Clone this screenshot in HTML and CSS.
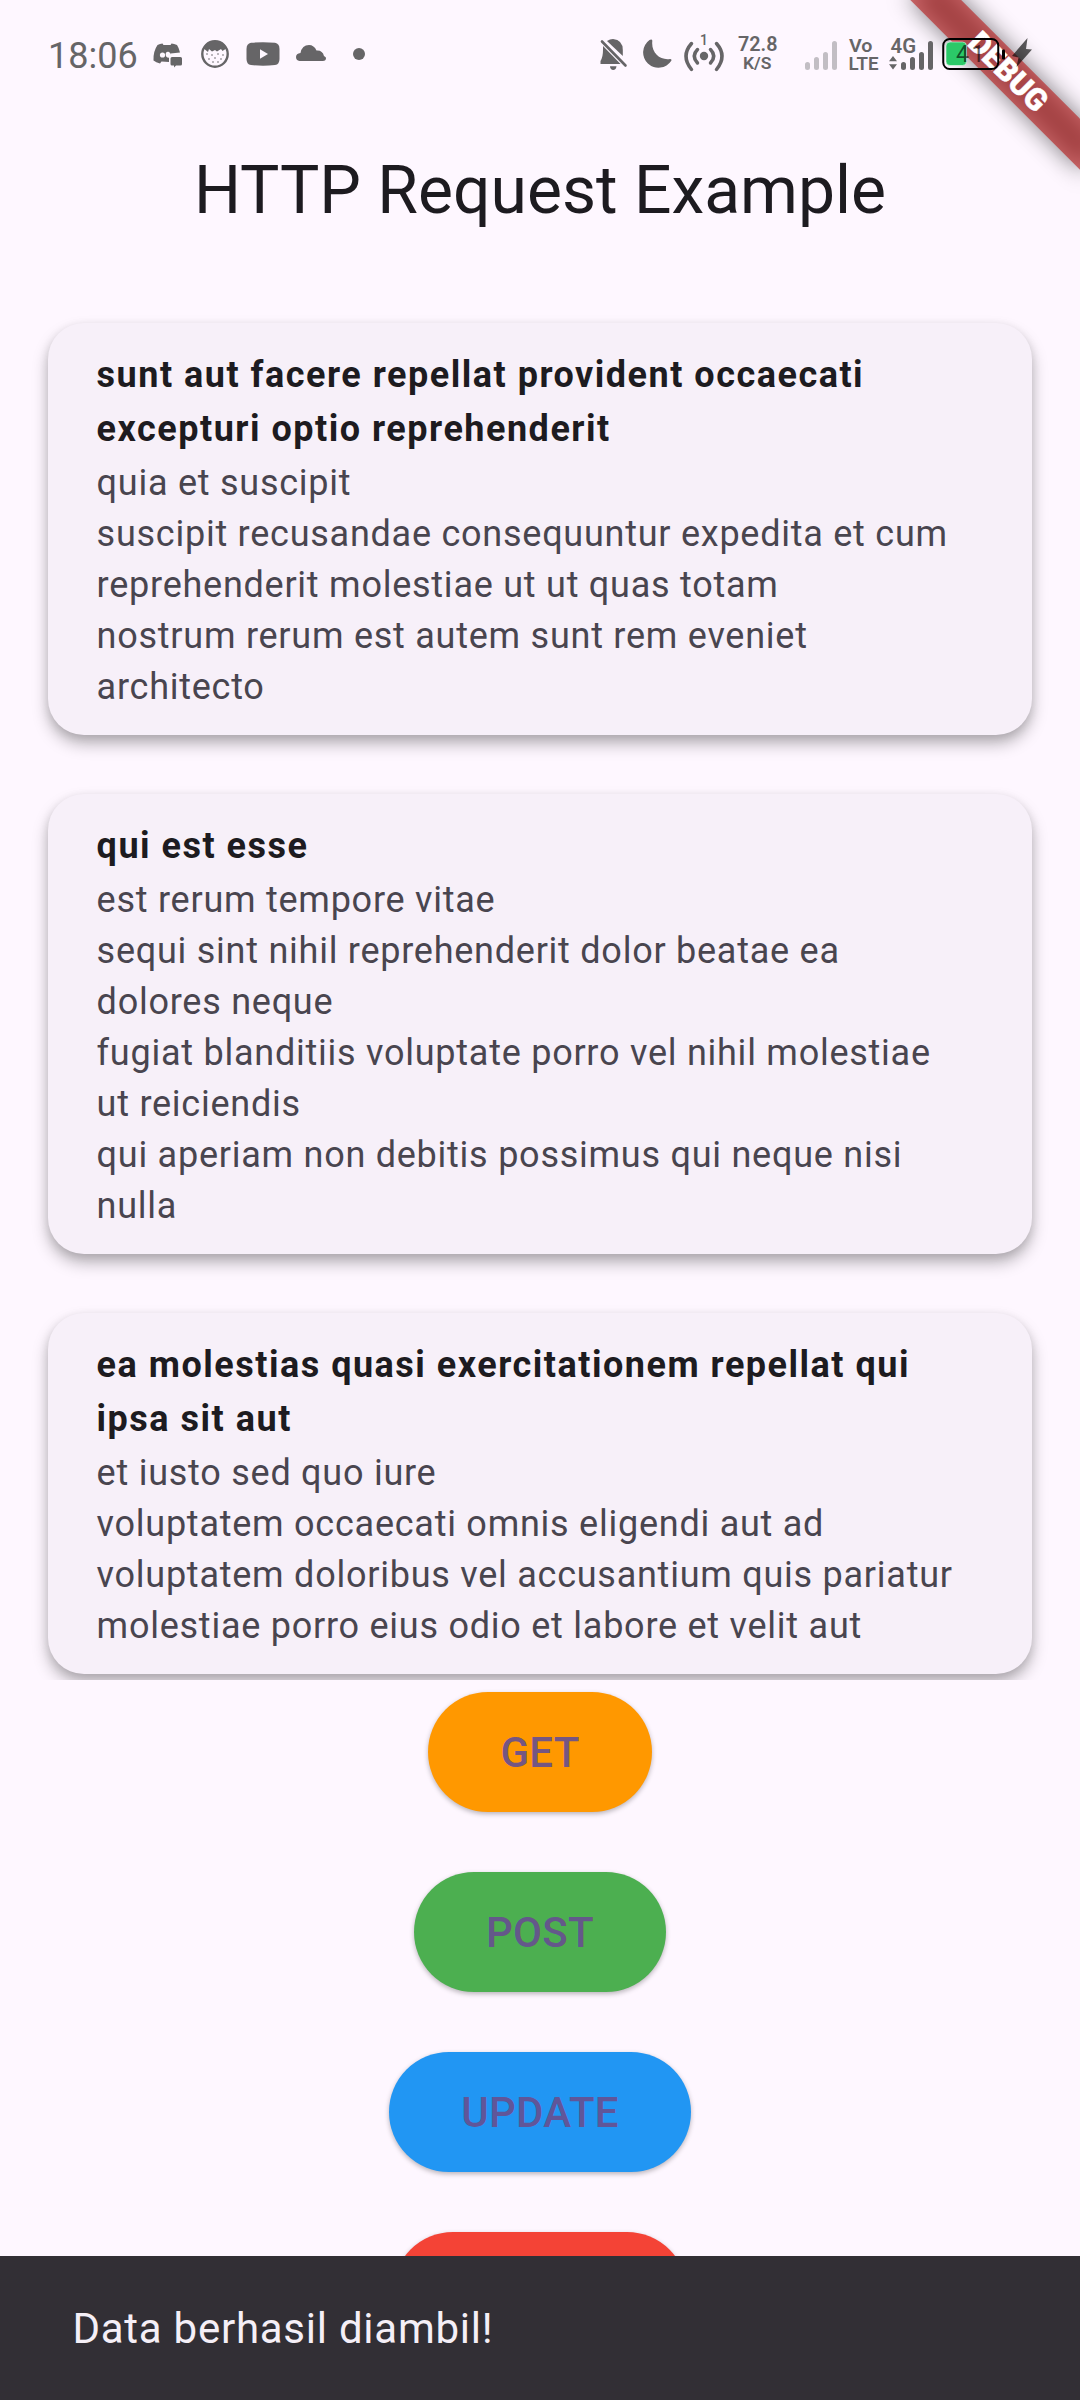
FILE: index.html
```html
<!DOCTYPE html>
<html lang="id">
<head>
<meta charset="utf-8">
<title>HTTP Request Example</title>
<link rel="stylesheet" href="styles.css">
</head>
<body>
<div class="screen">
  <header class="status-bar">
    <span class="clock">18:06</span>
    <svg class="status-left" viewBox="150 36 220 36" width="220" height="36" fill="#666567">
      <path d="M157.500 45 Q160 43.600 162.500 43.500 L163.500 45 H170.500 L171.500 43.500 Q174 43.600 177 45 Q179 48 180 52.500 L170.500 53.500 V55 A2.400 3 0 1 0 169 57.500 V62 L161.500 61.500 L160 63.500 Q156 62.500 153.500 60.500 Q153 51.500 157.500 45Z"/>
      <circle cx="162.500" cy="55" r="2.600" fill="#fef7ff"/>
      <path d="M172 57 H180.500 Q182 57 182 58.500 V64 Q182 65.500 180.500 65.500 H176 L174 67.500 V65.500 H172 Q170.500 65.500 170.500 64 V58.500 Q170.500 57 172 57Z"/>
      <circle cx="215" cy="54" r="12.700" fill="none" stroke="#666567" stroke-width="2.400"/>
      <path d="M203 48 Q207 41 215 41 T227 48 L222.500 51 L221 49 L217 51.500 L215 50 L212 51.500 L209 49 L208 52Z"/>
      <g><circle cx="207" cy="54" r=".8"/><circle cx="212" cy="55" r=".8"/><circle cx="218" cy="54" r=".8"/><circle cx="223" cy="55" r=".8"/><circle cx="209" cy="59" r=".8"/><circle cx="215" cy="58" r=".8"/><circle cx="221" cy="59" r=".8"/><circle cx="213" cy="62" r=".8"/><circle cx="218" cy="62" r=".8"/></g>
      <path d="M251 42.800 Q263 41.600 275 42.800 Q279.500 43.500 279.500 49 V59 Q279.500 64.500 275 65.100 Q263 66.200 251 65.100 Q246.500 64.500 246.500 59 V49 Q246.500 43.500 251 42.800Z"/>
      <path d="M260 49.300 L268 54 L260 58.800Z" fill="#fef7ff"/>
      <path d="M299.500 61 Q296 60.500 296 57 Q296 53.500 300.500 53 Q302 45 309 45 Q314 45 316.500 50.500 Q322.500 50 324 56 Q326.500 57 326 59 Q325.500 61 323 61Z"/>
      <circle cx="359" cy="54" r="6"/>
    </svg>
    <svg class="status-right" viewBox="596 30 454 44" width="454" height="44" fill="#666567">
      <path d="M603 46 V50 Q603 57 600.500 61 V64 H620.500Z"/>
      <path d="M607 41 Q610 39 613 39 Q622.800 40 622.800 50 V56Z"/>
      <path d="M610 66.200 H616.500 Q616 70 613.200 70 T610 66.200Z"/>
      <path d="M602 41.500 L625.500 65.500" stroke="#666567" stroke-width="2.600" stroke-linecap="round"/>
      <path d="M651 39.500 Q652.500 39.500 652.300 41 C651 53 660 60.500 670 59 Q672 59 671.300 60.700 A15.300 15.300 0 1 1 649.500 40 Q650.500 39.500 651 39.500Z"/>
      <circle cx="704" cy="56" r="4.200"/>
      <g fill="none" stroke="#666567" stroke-width="3.500" stroke-linecap="round">
        <path d="M697.500 49.500 Q691 56 697.500 63"/>
        <path d="M691.500 43.500 Q680.500 56 691.500 69.500"/>
        <path d="M710.500 49.500 Q717 56 710.500 63"/>
        <path d="M716.500 43.500 Q727.500 56 716.500 69.500"/>
      </g>
      <text x="704" y="45" class="tiny" text-anchor="middle">1</text>
      <text x="738" y="51" class="speed" textLength="39.500" lengthAdjust="spacingAndGlyphs">72.8</text>
      <text x="743" y="69" class="unit" textLength="28.500" lengthAdjust="spacingAndGlyphs">K/S</text>
      <g stroke="#c2bec4" stroke-width="5" stroke-linecap="round">
        <path d="M807.500 64.500 V67.500 M816.500 59.500 V67.500 M825.500 54.500 V67.500 M834.500 43.500 V67.500"/>
      </g>
      <text x="849" y="52" class="net" textLength="23.500" lengthAdjust="spacingAndGlyphs">Vo</text>
      <text x="848.500" y="70" class="net" textLength="30" lengthAdjust="spacingAndGlyphs">LTE</text>
      <text x="890.500" y="53" class="gen" textLength="25.500" lengthAdjust="spacingAndGlyphs">4G</text>
      <path d="M889 61.300 L893 56 L897 61.300Z M889 64.300 L893 69.500 L897 64.300Z"/>
      <g stroke="#666567" stroke-width="5" stroke-linecap="round">
        <path d="M903.500 64.500 V67.500 M912.500 59.500 V67.500 M921.500 54.500 V67.500 M930.500 43.500 V67.500"/>
      </g>
      <path d="M1027.500 38 L1026 49 L1032 49.500 L1016.500 67 L1018.500 57.500 L1012 56Z" fill="#000" fill-opacity=".64"/>
      <rect x="946" y="42" width="20.500" height="23.500" rx="4" fill="#2bc968" stroke="#fff" stroke-opacity=".5"/>
      <text x="956" y="62" class="level">41</text>
      <rect x="943.250" y="39" width="55" height="30" rx="6.500" fill="none" stroke="#000" stroke-width="2"/>
      <rect x="1002" y="49.500" width="3" height="10" rx="1" fill="#000"/>
    </svg>
  </header>
  <h1 class="app-title">HTTP Request Example</h1>

  <main class="posts">
    <article class="card">
      <h2>sunt aut facere repellat provident occaecati<br>excepturi optio reprehenderit</h2>
      <p>quia et suscipit<br>suscipit recusandae consequuntur expedita et cum<br>reprehenderit molestiae ut ut quas totam<br>nostrum rerum est autem sunt rem eveniet<br>architecto</p>
    </article>
    <article class="card">
      <h2>qui est esse</h2>
      <p>est rerum tempore vitae<br>sequi sint nihil reprehenderit dolor beatae ea<br>dolores neque<br>fugiat blanditiis voluptate porro vel nihil molestiae<br>ut reiciendis<br>qui aperiam non debitis possimus qui neque nisi<br>nulla</p>
    </article>
    <article class="card">
      <h2>ea molestias quasi exercitationem repellat qui<br>ipsa sit aut</h2>
      <p>et iusto sed quo iure<br>voluptatem occaecati omnis eligendi aut ad<br>voluptatem doloribus vel accusantium quis pariatur<br>molestiae porro eius odio et labore et velit aut</p>
    </article>
  </main>

  <div class="actions">
    <button class="btn get">GET</button>
    <button class="btn post">POST</button>
    <button class="btn update">UPDATE</button>
    <button class="btn delete">DELETE</button>
  </div>

  <div class="snackbar">Data berhasil diambil!</div>
  <div class="banner"><div class="ribbon-shadow"></div><div class="ribbon">DEBUG</div></div>
</div>
</body>
</html>
```
FILE: styles.css
```css
* { box-sizing: border-box; }
body { margin: 0; font-family: Roboto, "Liberation Sans", sans-serif; }
h1, h2, p { margin: 0; }

.screen {
  position: relative;
  display: flex;
  flex-direction: column;
  width: 1080px;
  height: 2400px;
  overflow: hidden;
  background: #fef7ff;
  color: #1d1b20;
}

/* The system bar stays above the debug ribbon. */
.status-bar {
  position: relative;
  z-index: 2;
  display: flex;
  align-items: flex-start;
  flex: none;
  height: 107px;
  padding-left: 48px;
  color: #666567;
}
.clock { width: 102px; margin-top: 34px; font-size: 36px; line-height: 44px; }
.status-left { margin-top: 36px; }
.status-right { margin: 30px 0 0 226px; }
.tiny { font-size: 14px; font-weight: 500; }
.speed { font-size: 21px; font-weight: 600; }
.unit { font-size: 17px; font-weight: 600; }
.net { font-size: 18.5px; font-weight: 600; }
.gen { font-size: 20.5px; font-weight: 600; }
.level { font-size: 23px; letter-spacing: 2.5px; fill: #000; fill-opacity: .62; }

.app-title {
  flex: none;
  height: 168px;
  font-size: 66px;
  line-height: 168px;
  font-weight: 400;
  text-align: center;
}

.posts {
  display: flex;
  flex-direction: column;
  flex: none;
  gap: 59px;
  height: 1405px;
  padding: 48px 48px 0;
  overflow: hidden;
}
.card {
  flex: none;
  padding: 25px 48px 22px 48.6px;
  border-radius: 36px;
  background: #f7f0f9;
  box-shadow: 0 9px 16px rgba(0, 0, 0, .27), 0 3px 10px rgba(0, 0, 0, .1);
}
.card h2 { font-size: 36px; line-height: 54px; font-weight: 700; letter-spacing: 1.5px; white-space: nowrap; }
.card p { padding-top: 2px; font-size: 36px; line-height: 51px; letter-spacing: .75px; color: #49454f; white-space: nowrap; }

.actions { display: flex; flex-direction: column; align-items: center; gap: 60px; padding-top: 12px; }
.btn {
  flex: none;
  height: 120px;
  padding: 2px 72px 0;
  border: 0;
  border-radius: 60px;
  font: 500 42px/60px Roboto, "Liberation Sans", sans-serif;
  letter-spacing: .3px;
  color: rgba(103, 80, 144, .93);
  box-shadow: 0 2px 5px rgba(0, 0, 0, .28);
}
.get { background: #ff9800; }
.post { background: #4caf50; }
.update { background: #2196f3; }
.delete { background: #f44336; }

.snackbar {
  position: absolute;
  left: 0;
  right: 0;
  bottom: 0;
  height: 144px;
  padding-left: 72.4px;
  background: #322f35;
  color: #f5eff7;
  font-size: 42px;
  line-height: 146px;
  letter-spacing: .75px;
}

.banner {
  position: absolute;
  top: 0;
  right: 0;
  width: 0;
  height: 0;
  transform: rotate(45deg);
}
.ribbon, .ribbon-shadow { position: absolute; left: -120px; top: 84px; width: 240px; height: 36px; }
.ribbon-shadow { background: rgba(0, 0, 0, .5); filter: blur(11.9px); }
.ribbon {
  background: rgba(183, 28, 28, .627);
  color: #fff;
  font-size: 30.6px;
  line-height: 36px;
  font-weight: 900;
  text-align: center;
  -webkit-text-stroke: .5px #fff;
}
```
